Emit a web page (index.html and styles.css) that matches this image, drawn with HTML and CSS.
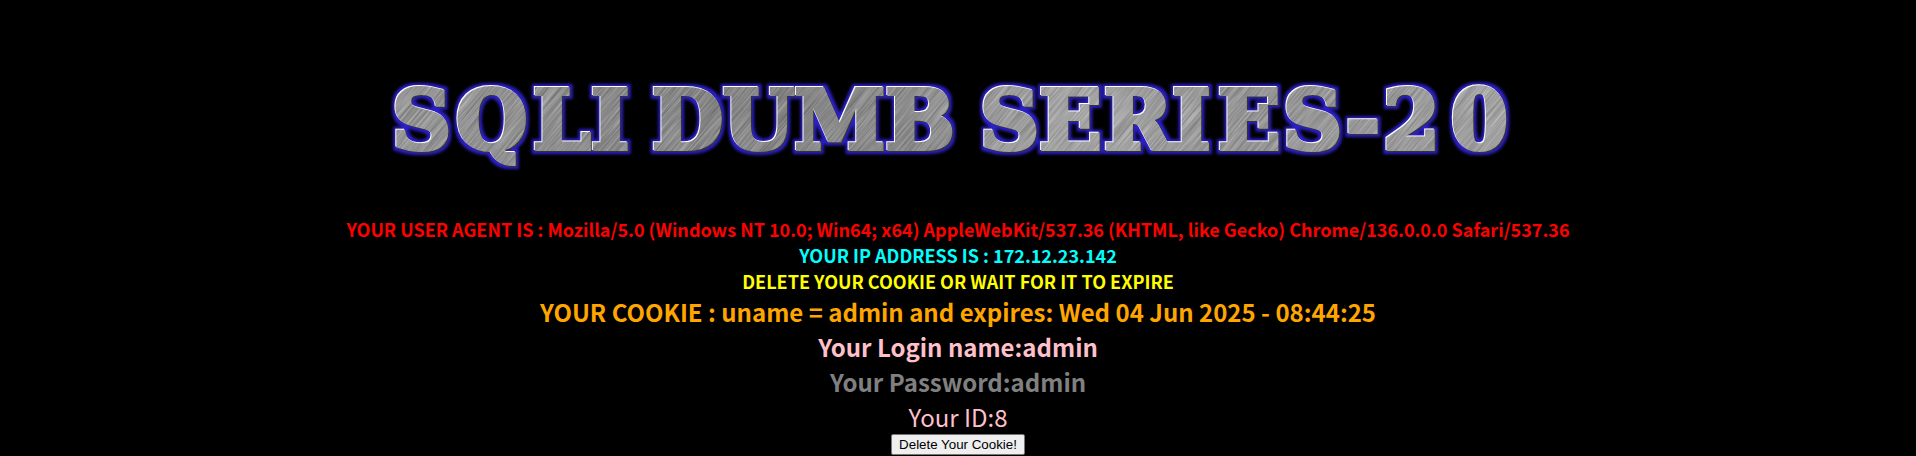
FILE: index.html
```html
<!DOCTYPE html>
<html lang="en">
<head>
<meta charset="utf-8">
<title>SQLI DUMB SERIES-20</title>
<link rel="stylesheet" href="styles.css">
</head>
<body>
<main class="page">
  <h1 class="banner">
    <svg class="logo" viewBox="0 0 1150 100" role="img" aria-label="SQLI DUMB SERIES-20">
      <defs>
        <filter id="glow" x="-5%" y="-30%" width="110%" height="160%" color-interpolation-filters="sRGB">
          <feMorphology in="SourceAlpha" operator="dilate" radius="3" result="fat"/>
          <feGaussianBlur in="fat" stdDeviation="1.4" result="soft"/>
          <feFlood flood-color="#2c20c8"/>
          <feComposite in2="soft" operator="in"/>
        </filter>
        <filter id="brushed" x="0" y="0" width="100%" height="100%" color-interpolation-filters="sRGB">
          <feTurbulence type="fractalNoise" baseFrequency="0.02 0.7" numOctaves="2" seed="4"/>
          <feColorMatrix values="0.4 0 0 0 0.36  0.4 0 0 0 0.36  0.4 0 0 0 0.36  0 0 0 0 1"/>
        </filter>
        <linearGradient id="sheen">
          <stop offset="0" stop-color="#fff" stop-opacity="0.08"/>
          <stop offset="0.3" stop-color="#000" stop-opacity="0.06"/>
          <stop offset="0.6" stop-color="#fff" stop-opacity="0.2"/>
          <stop offset="0.75" stop-color="#fff" stop-opacity="0.05"/>
          <stop offset="1" stop-color="#fff" stop-opacity="0.16"/>
        </linearGradient>
        <mask id="letters" maskUnits="userSpaceOnUse" x="0" y="0" width="1150" height="100">
          <use href="#words" class="face"/>
        </mask>
      </defs>
      <g filter="url(#glow)">
        <g id="words">
          <text x="9" y="78">S<tspan x="73">Q</tspan><tspan x="150">L</tspan><tspan x="208">I</tspan></text>
          <text x="269" y="78">DUMB</text>
          <text x="597" y="78">SE<tspan x="721">RI</tspan><tspan x="835">E</tspan><tspan x="900">S</tspan><tspan x="963">-</tspan><tspan x="1000">2</tspan><tspan x="1068">0</tspan></text>
        </g>
      </g>
      <use href="#words" class="shade" transform="translate(1 1)"/>
      <use href="#words" class="light" transform="translate(-1 -1)"/>
      <g mask="url(#letters)">
        <rect x="-100" y="-700" width="1400" height="1500" transform="rotate(-50 575 50)" filter="url(#brushed)"/>
        <rect width="1150" height="100" fill="url(#sheen)"/>
      </g>
    </svg>
  </h1>
  <p class="line agent">YOUR USER AGENT IS : Mozilla/5.0 (Windows NT 10.0; Win64; x64) AppleWebKit/537.36 (KHTML, like Gecko) Chrome/136.0.0.0 Safari/537.36</p>
  <p class="line address">YOUR IP ADDRESS IS : 172.12.23.142</p>
  <p class="line notice">DELETE YOUR COOKIE OR WAIT FOR IT TO EXPIRE</p>
  <p class="line large cookie">YOUR COOKIE : uname = admin and expires: Wed 04 Jun 2025 - 08:44:25</p>
  <p class="line large login">Your Login name:admin</p>
  <p class="line large password">Your Password:admin</p>
  <p class="line large ident">Your ID:8</p>
  <form class="actions"><button class="delete" type="button">Delete Your Cookie!</button></form>
</main>
</body>
</html>
```
FILE: styles.css
```css
body {
  margin: 0;
  background: #000;
  font-family: "Noto Sans CJK SC", "Noto Sans", sans-serif;
}

.page {
  display: flex;
  flex-direction: column;
  align-items: center;
  text-align: center;
}

.banner {
  margin: 0;
  padding: 71px 0 45px;
}

.logo {
  display: block;
  width: 1150px;
  max-width: 100%;
  height: auto;
  font-family: "DejaVu Serif", serif;
  font-size: 82px;
  font-weight: 700;
  stroke-width: 4px;
  stroke: #000;
}

.face {
  fill: #fff;
  stroke: #fff;
}

.light {
  fill: #fff;
  stroke: #fff;
}

.shade {
  fill: #333;
  stroke: #333;
}

.line {
  margin: 0;
  font-size: 18px;
  font-weight: 700;
  line-height: 26px;
}

.large {
  font-size: 24px;
  line-height: 35px;
}

.agent { color: #f00; }
.address { color: #0ff; }
.notice { color: #ff0; }
.cookie { color: orange; }
.login { color: pink; }
.password { color: gray; }

.ident {
  color: pink;
  font-weight: 400;
}

.actions {
  margin: 0;
}

.delete {
  display: block;
  padding: 2px 7px;
  border: 1px solid #767676;
  border-radius: 2px;
  background: #efefef;
  color: #000;
  font-family: "Liberation Sans", Arial, sans-serif;
  line-height: 15px;
}
```
